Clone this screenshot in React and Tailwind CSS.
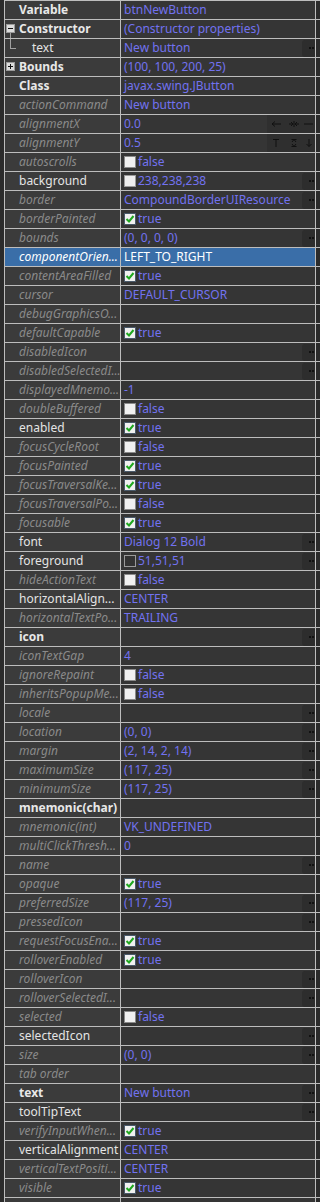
const rows = [
  { n: "Variable", s: "b", v: "btnNewButton" },
  { n: "Constructor", s: "b", v: "(Constructor properties)", tree: "minus" },
  { n: "text", s: "n", v: "New button", child: true, btn: true },
  { n: "Bounds", s: "b", v: "(100, 100, 200, 25)", tree: "plus" },
  { n: "Class", s: "b", v: "javax.swing.JButton" },
  { n: "actionCommand", s: "i", v: "New button" },
  { n: "alignmentX", s: "i", v: "0.0", align: "x" },
  { n: "alignmentY", s: "i", v: "0.5", align: "y" },
  { n: "autoscrolls", s: "i", cb: false },
  { n: "background", s: "n", sw: "#eeeeee", v: "238,238,238", btn: true },
  { n: "border", s: "i", v: "CompoundBorderUIResource", btn: true },
  { n: "borderPainted", s: "i", cb: true },
  { n: "bounds", s: "i", v: "(0, 0, 0, 0)", btn: true },
  { n: "componentOrien...", s: "i", v: "LEFT_TO_RIGHT", sel: true },
  { n: "contentAreaFilled", s: "i", cb: true },
  { n: "cursor", s: "i", v: "DEFAULT_CURSOR" },
  { n: "debugGraphicsO...", s: "i", v: "" },
  { n: "defaultCapable", s: "i", cb: true },
  { n: "disabledIcon", s: "i", v: "", btn: true },
  { n: "disabledSelectedI...", s: "i", v: "", btn: true },
  { n: "displayedMnemo...", s: "i", v: "-1" },
  { n: "doubleBuffered", s: "i", cb: false },
  { n: "enabled", s: "n", cb: true },
  { n: "focusCycleRoot", s: "i", cb: false },
  { n: "focusPainted", s: "i", cb: true },
  { n: "focusTraversalKe...", s: "i", cb: true },
  { n: "focusTraversalPo...", s: "i", cb: false },
  { n: "focusable", s: "i", cb: true },
  { n: "font", s: "n", v: "Dialog 12 Bold", btn: true },
  { n: "foreground", s: "n", sw: "#333333", v: "51,51,51", btn: true },
  { n: "hideActionText", s: "i", cb: false },
  { n: "horizontalAlign...", s: "n", v: "CENTER" },
  { n: "horizontalTextPo...", s: "i", v: "TRAILING" },
  { n: "icon", s: "b", v: "", btn: true },
  { n: "iconTextGap", s: "i", v: "4" },
  { n: "ignoreRepaint", s: "i", cb: false },
  { n: "inheritsPopupMe...", s: "i", cb: false },
  { n: "locale", s: "i", v: "", btn: true },
  { n: "location", s: "i", v: "(0, 0)", btn: true },
  { n: "margin", s: "i", v: "(2, 14, 2, 14)", btn: true },
  { n: "maximumSize", s: "i", v: "(117, 25)", btn: true },
  { n: "minimumSize", s: "i", v: "(117, 25)", btn: true },
  { n: "mnemonic(char)", s: "b", v: "" },
  { n: "mnemonic(int)", s: "i", v: "VK_UNDEFINED" },
  { n: "multiClickThresh...", s: "i", v: "0" },
  { n: "name", s: "i", v: "", btn: true },
  { n: "opaque", s: "i", cb: true },
  { n: "preferredSize", s: "i", v: "(117, 25)", btn: true },
  { n: "pressedIcon", s: "i", v: "", btn: true },
  { n: "requestFocusEna...", s: "i", cb: true },
  { n: "rolloverEnabled", s: "i", cb: true },
  { n: "rolloverIcon", s: "i", v: "", btn: true },
  { n: "rolloverSelectedI...", s: "i", v: "", btn: true },
  { n: "selected", s: "i", cb: false },
  { n: "selectedIcon", s: "n", v: "", btn: true },
  { n: "size", s: "i", v: "(0, 0)", btn: true },
  { n: "tab order", s: "i", v: "" },
  { n: "text", s: "b", v: "New button", btn: true },
  { n: "toolTipText", s: "n", v: "", btn: true },
  { n: "verifyInputWhen...", s: "i", cb: true },
  { n: "verticalAlignment", s: "n", v: "CENTER" },
  { n: "verticalTextPositi...", s: "i", v: "CENTER" },
  { n: "visible", s: "i", cb: true },
];

const nameClass = {
  b: "font-bold text-[#e8e8e8]",
  n: "text-[#e4e4e4]",
  i: "italic text-[#8a8a8a]",
};

function CheckBox({ checked }) {
  return (
    <svg width="12" height="12" viewBox="0 0 12 12" className="shrink-0">
      <rect x="0.5" y="0.5" width="11" height="11" fill="#f0f0f0" stroke={checked ? "#4a5a6a" : "#8a8a8a"} />
      {checked && <path d="M2.5 6 L5 8.5 L9.5 3" fill="none" stroke="#1fa81f" strokeWidth="2" />}
    </svg>
  );
}

function TreeBox({ plus }) {
  return (
    <svg width="9" height="9" viewBox="0 0 9 9" className="shrink-0">
      <rect x="0.5" y="0.5" width="8" height="8" fill="#dcdcdc" stroke="#9a9a9a" />
      <path d="M2 4.5 H7" stroke="#111" />
      {plus && <path d="M4.5 2 V7" stroke="#111" />}
    </svg>
  );
}

function MoreButton() {
  return (
    <div className="ml-auto flex h-[17px] w-[13px] shrink-0 items-center justify-end rounded-l-[3px] bg-[#2d2d2d] pr-[1px]">
      <span className="flex gap-[1px]">
        <span className="h-[2px] w-[2px] bg-[#111]" />
        <span className="h-[2px] w-[2px] bg-[#111]" />
      </span>
    </div>
  );
}

function AlignButtons({ axis }) {
  const icons =
    axis === "x"
      ? [
          <path key="a" d="M2 6 H11 M2 6 L5 3.5 M2 6 L5 8.5" stroke="#111" fill="none" />,
          <path key="b" d="M1 6 H5 M5 6 L3 4 M5 6 L3 8 M11 6 H7 M7 6 L9 4 M7 6 L9 8 M6 3 V9" stroke="#111" fill="none" />,
          <path key="c" d="M1 6 H10" stroke="#111" fill="none" />,
        ]
      : [
          <path key="a" d="M3 2.5 H9 M6 2.5 V10" stroke="#111" fill="none" />,
          <path key="b" d="M3.5 2.5 H8.5 M3.5 9.5 H8.5 M6 2.5 L4 5 M6 2.5 L8 5 M6 9.5 L4 7 M6 9.5 L8 7" stroke="#111" fill="none" />,
          <path key="c" d="M6 2 V9.5 M3.5 7 L6 9.5 L8.5 7" stroke="#111" fill="none" />,
        ];
  return (
    <div className="ml-auto flex h-[18px] shrink-0 gap-[1px] bg-[#2f2f2f]">
      {icons.map((ic, i) => (
        <div key={i} className={`flex h-[18px] items-center justify-center ${i === 2 ? "w-[12px] justify-end" : "w-[17px]"}`}>
          <svg width="12" height="12" viewBox="0 0 12 12">{ic}</svg>
        </div>
      ))}
    </div>
  );
}

function Row({ r }) {
  return (
    <div className="flex h-[19px] border-t border-[#bdbdbd]">
      <div className={`relative flex w-[116px] shrink-0 items-center overflow-hidden whitespace-nowrap border-r border-[#bdbdbd] ${r.sel ? "bg-[#3a6ea8]" : "bg-[#3b3b3b]"}`}>
        {r.tree && (
          <div className="absolute left-[1px] top-[4px]">
            <TreeBox plus={r.tree === "plus"} />
          </div>
        )}
        {r.tree === "minus" && <div className="absolute left-[5px] top-[13px] h-[6px] w-[1px] bg-[#a0a0a0]" />}
        {r.child && (
          <>
            <div className="absolute left-[5px] top-0 h-[9px] w-[1px] bg-[#a0a0a0]" />
            <div className="absolute left-[5px] top-[9px] h-[1px] w-[6px] bg-[#a0a0a0]" />
          </>
        )}
        <span className={`${r.child ? "pl-[27px]" : "pl-[14px]"} ${r.sel ? "italic text-white" : nameClass[r.s]}`}>{r.n}</span>
      </div>
      <div className={`flex w-[195px] shrink-0 items-center overflow-hidden whitespace-nowrap border-r border-[#bdbdbd] pl-[3px] ${r.sel ? "bg-[#3a6ea8] text-white" : "bg-[#353535] text-[#7272f0]"}`}>
        {r.cb !== undefined && (
          <>
            <CheckBox checked={r.cb} />
            <span className="pl-[2px]">{r.cb ? "true" : "false"}</span>
          </>
        )}
        {r.sw && (
          <span className="h-[12px] w-[12px] shrink-0 border border-[#9a9a9a]" style={{ background: r.sw }} />
        )}
        {r.v !== undefined && <span className={r.sw ? "pl-[2px]" : ""}>{r.v}</span>}
        {r.btn && <MoreButton />}
        {r.align && <AlignButtons axis={r.align} />}
      </div>
      <div className="w-[2px] shrink-0 bg-[#2b2b2b]" />
    </div>
  );
}

export default function App() {
  return (
    <div className="h-[1202px] w-[320px] overflow-hidden bg-[#2b2b2b] pl-[4px] text-[12px] leading-[18px]" style={{ fontFamily: '"Noto Sans", "Open Sans", sans-serif' }}>
      <div className="border-l border-[#bdbdbd]">
        {rows.map((r, i) => (
          <Row key={i} r={r} />
        ))}
        <Row r={{ n: "", s: "n", v: "" }} />
      </div>
    </div>
  );
}
